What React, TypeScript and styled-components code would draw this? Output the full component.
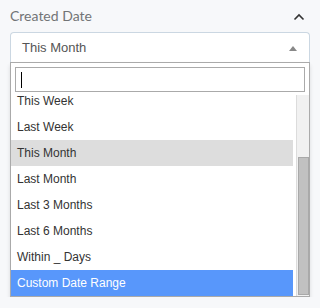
import { useLayoutEffect, useRef } from 'react';
import styled, { createGlobalStyle } from 'styled-components';

const GlobalStyle = createGlobalStyle`
  body {
    margin: 0;
    background: #f7f8fa;
    font-family: "Liberation Sans", Arial, sans-serif;
  }
`;

const Panel = styled.div`
  padding: 0 10px;
  width: 300px;
`;

const Header = styled.div`
  display: flex;
  align-items: center;
  justify-content: space-between;
  height: 32px;
`;

const Label = styled.span`
  font-family: Lato, "Liberation Sans", sans-serif;
  font-size: 14px;
  line-height: 18px;
  color: #727476;
`;

const Chevron = styled.svg`
  width: 12px;
  height: 8px;
  margin-right: 5px;
  margin-top: 2px;
`;

const Selection = styled.div`
  display: flex;
  align-items: center;
  justify-content: space-between;
  height: 30px;
  box-sizing: border-box;
  border: 1px solid #cbd7e2;
  border-bottom: none;
  border-radius: 4px 4px 0 0;
  background: #fff;
  padding: 0 12px 0 11px;
  font-size: 13px;
  line-height: 16px;
  color: #555;
`;

const Arrow = styled.span`
  width: 0;
  height: 0;
  border-left: 4px solid transparent;
  border-right: 4px solid transparent;
  border-bottom: 5px solid #888;
  margin-top: 2px;
`;

const Dropdown = styled.div`
  background: #fff;
  border: 1px solid #aaa;
  box-shadow: 0 3px 4px rgba(0, 0, 0, 0.12);
`;

const SearchWrap = styled.div`
  padding: 4px 4px 3px;
`;

const SearchField = styled.label`
  display: flex;
  align-items: center;
  height: 25px;
  box-sizing: border-box;
  border: 1px solid #aaa;
  padding-left: 5px;
`;

const Caret = styled.span`
  width: 1px;
  height: 16px;
  background: #000;
`;

const SearchInput = styled.input`
  flex: 1;
  min-width: 0;
  height: 20px;
  border: none;
  outline: none;
  background: transparent;
  font-size: 13px;
  padding: 0 0 0 2px;
`;

const Results = styled.div`
  display: flex;
  height: 201px;
`;

const List = styled.ul`
  flex: 1;
  list-style: none;
  margin: 0;
  padding: 0 3px 0 0;
  overflow: hidden;
`;

const Track = styled.div`
  width: 13px;
  box-sizing: border-box;
  display: flex;
  flex-direction: column;
  justify-content: flex-end;
  padding: 0 0 1px 1px;
  background: #f1f1f1;
  border-left: 1px solid #dcdcdc;
`;

const Thumb = styled.div`
  background: #c1c1c1;
  border: 1px solid #a9a9a9;
`;

const Option = styled.li<{ $state?: 'selected' | 'highlighted' }>`
  padding: 6px;
  line-height: 14px;
  font-size: 12px;
  white-space: nowrap;
  color: ${p => (p.$state === 'highlighted' ? '#fff' : '#333')};
  background: ${p =>
    p.$state === 'highlighted' ? '#5897fb' : p.$state === 'selected' ? '#ddd' : 'transparent'};
`;

const options = [
  'Today',
  'Yesterday',
  'Last 7 Days',
  'This Week',
  'Last Week',
  'This Month',
  'Last Month',
  'Last 3 Months',
  'Last 6 Months',
  'Within _ Days',
  'Custom Date Range',
];

const ROW = 26;
const VIEW = 201;

export default function App() {
  const listRef = useRef<HTMLUListElement>(null);
  const content = options.length * ROW;
  const thumbHeight = Math.round((VIEW * (VIEW - 1)) / content) - 5;

  useLayoutEffect(() => {
    if (listRef.current) listRef.current.scrollTop = listRef.current.scrollHeight;
  }, []);

  return (
    <Panel>
      <GlobalStyle />
      <Header>
        <Label>Created Date</Label>
        <Chevron viewBox="0 0 12 8">
          <path d="M1.5 6.5 L6 2 L10.5 6.5" fill="none" stroke="#333" strokeWidth="1.6" />
        </Chevron>
      </Header>
      <Selection>
        <span>This Month</span>
        <Arrow />
      </Selection>
      <Dropdown>
        <SearchWrap>
          <SearchField>
            <Caret />
            <SearchInput type="text" aria-label="Search" />
          </SearchField>
        </SearchWrap>
        <Results>
          <List ref={listRef}>
            {options.map(o => (
              <Option
                key={o}
                $state={o === 'This Month' ? 'selected' : o === 'Custom Date Range' ? 'highlighted' : undefined}
              >
                {o}
              </Option>
            ))}
          </List>
          <Track>
            <Thumb style={{ height: thumbHeight }} />
          </Track>
        </Results>
      </Dropdown>
    </Panel>
  );
}
